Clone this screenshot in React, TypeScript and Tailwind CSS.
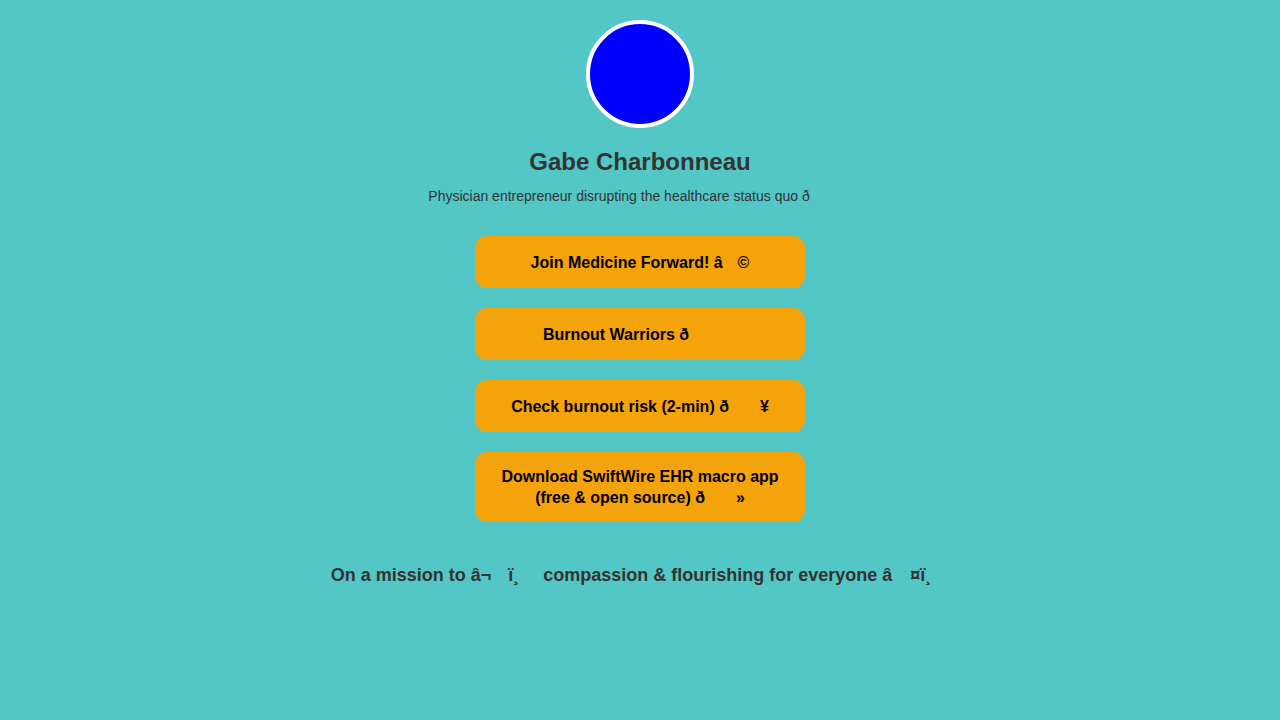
import React from "react";

function Gap({ w }: { w: string }) {
  return <span className={`inline-block ${w}`} />;
}

const buttons: { key: string; content: React.ReactNode }[] = [
  {
    key: "mf",
    content: (
      <>
        Join Medicine Forward! â<Gap w="w-[15px]" />©
      </>
    ),
  },
  {
    key: "bw",
    content: (
      <>
        Burnout Warriors ð<Gap w="w-[48px]" />
      </>
    ),
  },
  {
    key: "risk",
    content: (
      <>
        Check burnout risk (2-min) ð<Gap w="w-[31px]" />¥
      </>
    ),
  },
  {
    key: "sw",
    content: (
      <>
        Download SwiftWire EHR macro app
        <br />
        (free &amp; open source) ð<Gap w="w-[31px]" />»
      </>
    ),
  },
];

export default function App() {
  return (
    <div className="min-h-[720px] w-full bg-[#53c7c5] font-['Liberation_Sans',Arial,sans-serif] text-[#333333]">
      <div className="flex flex-col items-center pt-5">
        <div className="h-[108px] w-[108px] rounded-full border-4 border-white bg-[#0000ff]" />
        <h1 className="mt-[19px] text-[24px] font-bold leading-[30px]">Gabe Charbonneau</h1>
        <p className="mt-[10px] text-[14px] leading-[18px]">
          Physician entrepreneur disrupting the healthcare status quo ð<Gap w="w-[42px]" />
        </p>
        <div className="mt-[31px] flex flex-col gap-5">
          {buttons.map((b) => (
            <a
              key={b.key}
              href="#"
              className="flex min-h-[52px] w-[330px] items-center justify-center rounded-xl bg-[#f5a30a] px-4 py-[14px] text-center text-[16px] font-bold leading-[21px] text-black"
            >
              <span>{b.content}</span>
            </a>
          ))}
        </div>
        <p className="mt-[41px] text-[18px] font-bold leading-[24px]">
          On a mission to â¬<Gap w="w-[17px]" />ï¸<Gap w="w-[24px]" />compassion &amp; flourishing for everyone â<Gap w="w-[18px]" />¤ï¸<Gap w="w-[18px]" />
        </p>
      </div>
    </div>
  );
}
